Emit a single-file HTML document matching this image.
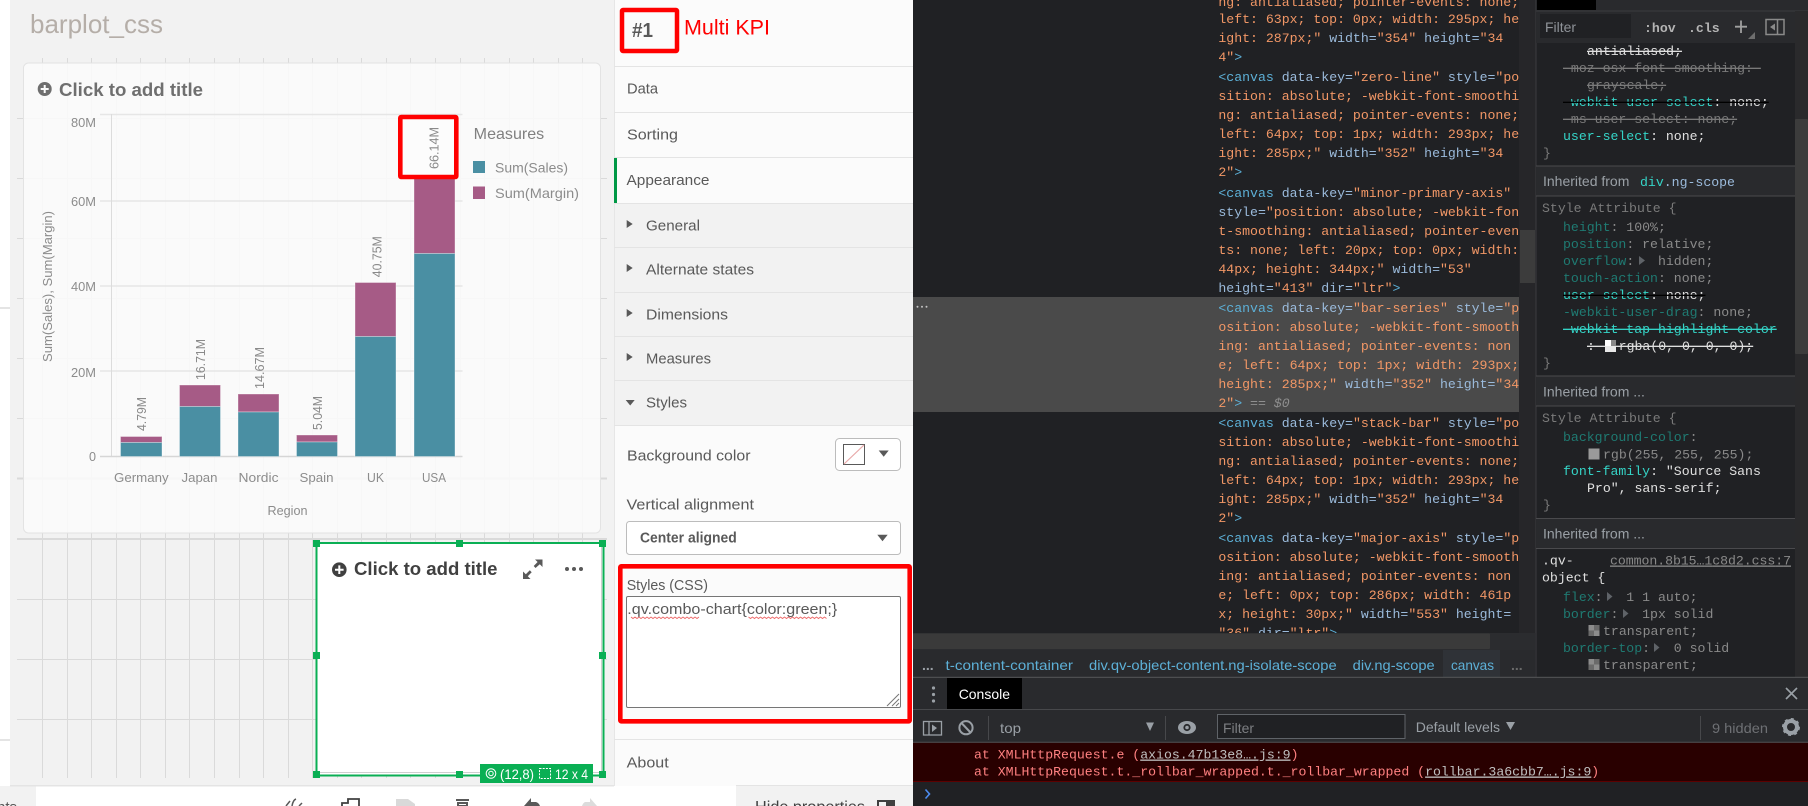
<!DOCTYPE html>
<html><head><meta charset="utf-8"><title>barplot_css</title>
<style>
html,body{margin:0;padding:0;width:1808px;height:806px;overflow:hidden;background:#202124}
svg{display:block}
text{white-space:pre;font-family:"Liberation Sans",sans-serif}
.m text,text.m{font-family:"Liberation Mono",monospace;font-size:13.2px}
.t{fill:#5db0d7}.a{fill:#9bbbdc}.v{fill:#f29766}.i{fill:#8f8f8f;font-style:italic}
.n{fill:#35d4c7}.w{fill:#e0e0e0}.dn{fill:#1f7a72}.dv{fill:#8a8a8a}.g{fill:#7a7a7a}
.p{font-size:15px;fill:#595959}
.ax{font-size:13px;fill:#8c8c8c}
.dl{font-size:12.5px;fill:#8a8a8a;text-anchor:middle}
</style></head><body>
<svg width="1808" height="806" viewBox="0 0 1808 806" xmlns="http://www.w3.org/2000/svg">
<!-- left strip + canvas -->
<rect x="0" y="0" width="10" height="786" fill="#fff"/>
<rect x="0" y="307" width="10" height="2" fill="#e4e4e4"/>
<rect x="0" y="739" width="10" height="2" fill="#e4e4e4"/>
<rect x="10" y="0" width="604" height="786" fill="#f2f2f2"/>
<g stroke="#dadada" stroke-width="1">
<path d="M42.5 58V778M67.5 58V778M91.5 58V778M116.5 58V778M140.5 58V778M165.5 58V778M189.5 58V778M214.5 58V778M239.5 58V778M263.5 58V778M288.5 58V778M312.5 58V778M337.5 58V778M361.5 58V778M386.5 58V778M410.5 58V778M435.5 58V778M460.5 58V778M484.5 58V778M509.5 58V778M533.5 58V778M558.5 58V778M582.5 58V778"/>
<path d="M17 118.5H607M17 178.5H607M17 238.5H607M17 298.5H607M17 358.5H607M17 418.5H607M17 599.5H607M17 659.5H607M17 719.5H607"/>
<path d="M17 478.5H607M17 539H607" stroke-width="2"/>
</g>
<text x="30" y="33" font-size="26" fill="#b5aea8" textLength="133" lengthAdjust="spacingAndGlyphs">barplot_css</text>
<!-- card -->
<rect x="23.5" y="63" width="577" height="470" rx="5" fill="#fcfcfc" fill-opacity=".86" stroke="#e3e3e3"/>
<circle cx="44.7" cy="89" r="7" fill="#6f6f6f"/><path d="M40.7 89H48.7M44.7 85V93" stroke="#fcfcfc" stroke-width="2"/>
<text x="59" y="96" font-size="18.5" font-weight="bold" fill="#6f6f6f" textLength="144" lengthAdjust="spacingAndGlyphs">Click to add title</text>
<!-- chart grid -->
<g stroke="#e6e6e6"><path d="M100 114.5H462.5M100 201H462.5M100 286H462.5M100 371H462.5" stroke-width="1.5"/><path d="M111.5 114V456" stroke="#dcdcdc"/><path d="M100 456.5H462.5" stroke="#d6d6d6" stroke-width="1.5"/></g>
<g class="ax"><text class="ax" x="71" y="127" textLength="25" lengthAdjust="spacingAndGlyphs">80M</text>
<text class="ax" x="71" y="206" textLength="25" lengthAdjust="spacingAndGlyphs">60M</text>
<text class="ax" x="71" y="291" textLength="25" lengthAdjust="spacingAndGlyphs">40M</text>
<text class="ax" x="71" y="377" textLength="25" lengthAdjust="spacingAndGlyphs">20M</text>
<text class="ax" x="89" y="461" textLength="7" lengthAdjust="spacingAndGlyphs">0</text></g>
<!-- bars -->
<g stroke="#ffffff" stroke-opacity=".35">
<rect x="120.5" y="436.5" width="41.5" height="6" fill="#a65b86"/><rect x="120.5" y="442.5" width="41.5" height="14" fill="#4a8fa3"/>
<rect x="179.5" y="385" width="41" height="21.5" fill="#a65b86"/><rect x="179.5" y="406.5" width="41" height="50" fill="#4a8fa3"/>
<rect x="238" y="394" width="41" height="18" fill="#a65b86"/><rect x="238" y="412" width="41" height="44.5" fill="#4a8fa3"/>
<rect x="296.5" y="435" width="41" height="7" fill="#a65b86"/><rect x="296.5" y="442" width="41" height="14.5" fill="#4a8fa3"/>
<rect x="355" y="282.5" width="41" height="54" fill="#a65b86"/><rect x="355" y="336.5" width="41" height="120" fill="#4a8fa3"/>
<rect x="414" y="174" width="41" height="79.5" fill="#a65b86"/><rect x="414" y="253.5" width="41" height="203" fill="#4a8fa3"/>
</g>
<text class="dl" transform="translate(141.6,414) rotate(-90)" y="4.5" textLength="34" lengthAdjust="spacingAndGlyphs">4.79M</text>
<text class="dl" transform="translate(200.5,359.5) rotate(-90)" y="4.5" textLength="41" lengthAdjust="spacingAndGlyphs">16.71M</text>
<text class="dl" transform="translate(259.4,368) rotate(-90)" y="4.5" textLength="42" lengthAdjust="spacingAndGlyphs">14.67M</text>
<text class="dl" transform="translate(317.5,413) rotate(-90)" y="4.5" textLength="34" lengthAdjust="spacingAndGlyphs">5.04M</text>
<text class="dl" transform="translate(377,256.7) rotate(-90)" y="4.5" textLength="41" lengthAdjust="spacingAndGlyphs">40.75M</text>
<rect x="400.5" y="117" width="56" height="60" fill="#fcfcfc"/>
<text class="dl" transform="translate(434,148) rotate(-90)" y="4.5" textLength="42" lengthAdjust="spacingAndGlyphs">66.14M</text>
<rect x="400.3" y="117" width="56" height="60" rx="1" fill="none" stroke="#ff0000" stroke-width="4.6"/>
<text class="ax" x="114" y="482" textLength="54.6" lengthAdjust="spacingAndGlyphs">Germany</text>
<text class="ax" x="181.5" y="482" textLength="36" lengthAdjust="spacingAndGlyphs">Japan</text>
<text class="ax" x="238.5" y="482" textLength="40" lengthAdjust="spacingAndGlyphs">Nordic</text>
<text class="ax" x="299.5" y="482" textLength="34" lengthAdjust="spacingAndGlyphs">Spain</text>
<text class="ax" x="367" y="482" textLength="17" lengthAdjust="spacingAndGlyphs">UK</text>
<text class="ax" x="422" y="482" textLength="24" lengthAdjust="spacingAndGlyphs">USA</text>
<text class="ax" x="267.5" y="515" textLength="40" lengthAdjust="spacingAndGlyphs">Region</text>
<text class="ax" text-anchor="middle" transform="translate(47.5,286.5) rotate(-90)" y="4.5" textLength="151" lengthAdjust="spacingAndGlyphs">Sum(Sales), Sum(Margin)</text>
<!-- legend -->
<text x="473.7" y="139" font-size="16" fill="#808080" textLength="70.5" lengthAdjust="spacingAndGlyphs">Measures</text>
<rect x="473" y="161" width="12" height="12" fill="#4a8fa3"/><rect x="473" y="186.5" width="12" height="12.5" fill="#a65b86"/>
<text x="495" y="172.5" font-size="14" fill="#8c8c8c" textLength="73" lengthAdjust="spacingAndGlyphs">Sum(Sales)</text>
<text x="495" y="198" font-size="14" fill="#8c8c8c" textLength="84" lengthAdjust="spacingAndGlyphs">Sum(Margin)</text>
<!-- selected object -->
<rect x="316.5" y="543" width="287" height="232.5" fill="#fff" stroke="#0aaf54" stroke-width="2"/>
<path d="M318 772.5H601.5V545" fill="none" stroke="#cfcfcf" stroke-width="1"/>
<circle cx="339.3" cy="569.7" r="7.3" fill="#404040"/><path d="M335 569.7H343.6M339.3 565.4V574" stroke="#fff" stroke-width="2"/>
<text x="354" y="575" font-size="18.5" font-weight="bold" fill="#404040" textLength="143.5" lengthAdjust="spacingAndGlyphs">Click to add title</text>
<path d="M535 559.5H542.5V567L539.8 564.3L535.5 568L533.7 566L537.6 562Z" fill="#595959"/>
<path d="M523 579H530.5L527.8 576.3L531.7 572.2L529.8 570.3L525.8 574.3L523 571.5Z" fill="#595959"/>
<circle cx="567" cy="569" r="2" fill="#595959"/><circle cx="574" cy="569" r="2" fill="#595959"/><circle cx="581" cy="569" r="2" fill="#595959"/>
<g fill="#0aaf54">
<rect x="313" y="540" width="7" height="7"/><rect x="456" y="540" width="7" height="7"/><rect x="599" y="540" width="7" height="7"/>
<rect x="313" y="652" width="7" height="7"/><rect x="599" y="652" width="7" height="7"/>
<rect x="313" y="771" width="7" height="7"/><rect x="456" y="771" width="7" height="7"/><rect x="599" y="771" width="7" height="7"/>
<rect x="480" y="764" width="113" height="19"/></g>
<circle cx="491" cy="773.5" r="4.8" fill="none" stroke="#fff"/><circle cx="491" cy="773.5" r="2.2" fill="none" stroke="#fff"/>
<text x="500" y="779" font-size="14" fill="#fff" textLength="34" lengthAdjust="spacingAndGlyphs">(12,8)</text>
<rect x="539.5" y="768.5" width="11" height="10" fill="none" stroke="#fff" stroke-dasharray="2 1.2"/>
<text x="555" y="779" font-size="14" fill="#fff" textLength="33" lengthAdjust="spacingAndGlyphs">12 x 4</text>
<!-- bottom toolbar -->
<rect x="0" y="786" width="36" height="20" fill="#f2f2f2"/>
<rect x="36" y="786" width="700" height="20" fill="#fff"/>
<rect x="10" y="785" width="604" height="1.5" fill="#e4e4e4"/>
<text x="-3" y="812" font-size="15" fill="#595959">nts</text>
<path d="M286 806L290 801M292 806Q293 800 296 799M299 806L302 803" stroke="#595959" stroke-width="1.5" fill="none"/>
<path d="M342 806V803H348V799H359V806" fill="none" stroke="#404040" stroke-width="1.8"/>
<path d="M396 806V799H408L415 804V806Z" fill="#d9d9d9"/>
<path d="M456 800H469M458 803H467V806H458Z" stroke="#595959" stroke-width="2" fill="none"/>
<path d="M524 806L531 798V802H536Q539 803 540 806Z" fill="#595959"/>
<path d="M597 806L590 798V802H585Q583 803 582 806Z" fill="#dcdcdc"/>
<!-- properties panel -->
<rect x="614" y="0" width="299" height="786" fill="#fbfbfb"/>
<rect x="614" y="203" width="299" height="222" fill="#f2f2f2"/>
<rect x="736" y="786" width="177" height="20" fill="#f2f2f2"/>
<rect x="614" y="0" width="1" height="786" fill="#e6e6e6"/>
<g fill="#e4e4e4"><rect x="614" y="66" width="299" height="1"/><rect x="614" y="112" width="299" height="1"/><rect x="614" y="157" width="299" height="1"/><rect x="614" y="203" width="299" height="1"/><rect x="614" y="247" width="299" height="1"/><rect x="614" y="292" width="299" height="1"/><rect x="614" y="336" width="299" height="1"/><rect x="614" y="380" width="299" height="1"/><rect x="614" y="425" width="299" height="1"/><rect x="614" y="739" width="299" height="1"/><rect x="736" y="785" width="177" height="1"/></g>
<rect x="614" y="158" width="3" height="45" fill="#009845"/>
<rect x="622" y="10" width="55" height="41" rx="1" fill="none" stroke="#ff0000" stroke-width="4.5"/>
<text x="632" y="37" font-size="20" font-weight="bold" fill="#595959" textLength="21" lengthAdjust="spacingAndGlyphs">#1</text>
<text x="684" y="34.5" font-size="21" fill="#ff0000" textLength="86" lengthAdjust="spacingAndGlyphs">Multi KPI</text>
<text class="p" x="627" y="93.5" textLength="31" lengthAdjust="spacingAndGlyphs">Data</text>
<text class="p" x="627" y="139.5" textLength="51" lengthAdjust="spacingAndGlyphs">Sorting</text>
<text class="p" x="626.5" y="185" textLength="83" lengthAdjust="spacingAndGlyphs">Appearance</text>
<text class="p" x="646" y="230.5" textLength="54" lengthAdjust="spacingAndGlyphs">General</text>
<text class="p" x="646" y="274.5" textLength="108" lengthAdjust="spacingAndGlyphs">Alternate states</text>
<text class="p" x="646" y="319.5" textLength="82" lengthAdjust="spacingAndGlyphs">Dimensions</text>
<text class="p" x="646" y="363.5" textLength="65" lengthAdjust="spacingAndGlyphs">Measures</text>
<text class="p" x="646" y="407.5" textLength="41" lengthAdjust="spacingAndGlyphs">Styles</text>
<g fill="#595959"><path d="M626.7 220V228L632.7 224Z"/><path d="M626.7 264V272L632.7 268Z"/><path d="M626.7 309V317L632.7 313Z"/><path d="M626.7 353V361L632.7 357Z"/><path d="M625.7 400H634.7L630.2 405.5Z"/></g>
<text class="p" x="627" y="460.5" textLength="123.5" lengthAdjust="spacingAndGlyphs">Background color</text>
<rect x="835.5" y="438.5" width="65" height="32" rx="4" fill="#fff" stroke="#bcbcbc"/>
<rect x="843.5" y="444.5" width="21" height="20" fill="#fff" stroke="#595959"/><path d="M844 464L864 445" stroke="#e8a8a8" stroke-width="1.2"/>
<path d="M878.7 450.5H888.7L883.7 456.7Z" fill="#595959"/>
<text class="p" x="626.5" y="509.5" textLength="127.5" lengthAdjust="spacingAndGlyphs">Vertical alignment</text>
<rect x="626.5" y="521.5" width="274" height="33" rx="3" fill="#fff" stroke="#bcbcbc"/>
<text x="640" y="542.5" font-size="14.5" font-weight="bold" fill="#595959" textLength="96.7" lengthAdjust="spacingAndGlyphs">Center aligned</text>
<path d="M877.3 534.7H887.7L882.5 541.3Z" fill="#595959"/>
<rect x="620.3" y="566.3" width="289.4" height="155" rx="1" fill="none" stroke="#ff0000" stroke-width="4.6"/>
<text class="p" x="626.7" y="590" textLength="81.3" lengthAdjust="spacingAndGlyphs">Styles (CSS)</text>
<rect x="626.5" y="596.5" width="274" height="111" rx="1.5" fill="#fff" stroke="#767676"/>
<text class="p" x="627.3" y="614" textLength="210" lengthAdjust="spacingAndGlyphs">.qv.combo-chart{color:green;}</text>
<path d="M631 617l2 1.5 2-1.5 2 1.5 2-1.5 2 1.5 2-1.5 2 1.5 2-1.5 2 1.5 2-1.5 2 1.5 2-1.5 2 1.5 2-1.5 2 1.5 2-1.5 2 1.5 2-1.5 2 1.5 2-1.5 2 1.5 2-1.5 2 1.5 2-1.5 2 1.5 2-1.5 2 1.5 2-1.5 2 1.5 2-1.5 2 1.5 2-1.5 2 1.5 2-1.5" fill="none" stroke="#e66" stroke-width=".9"/>
<path d="M748.5 617l2 1.5 2-1.5 2 1.5 2-1.5 2 1.5 2-1.5 2 1.5 2-1.5 2 1.5 2-1.5 2 1.5 2-1.5 2 1.5 2-1.5 2 1.5 2-1.5 2 1.5 2-1.5 2 1.5 2-1.5 2 1.5 2-1.5 2 1.5 2-1.5 2 1.5 2-1.5 2 1.5 2-1.5 2 1.5 2-1.5 2 1.5 2-1.5 2 1.5 2-1.5 2 1.5 2-1.5 2 1.5 2-1.5 2 1.5" fill="none" stroke="#e66" stroke-width=".9"/>
<path d="M887 706L899 694M892 706L899 699M896 706L899 703" stroke="#777" stroke-width="1" fill="none"/>
<text class="p" x="626.7" y="767.5" textLength="42" lengthAdjust="spacingAndGlyphs">About</text>
<text x="755" y="812" font-size="16" fill="#404040" textLength="110" lengthAdjust="spacingAndGlyphs">Hide properties</text>
<rect x="878" y="801" width="16" height="12" fill="none" stroke="#404040" stroke-width="2"/><rect x="886" y="801" width="8" height="8" fill="#404040"/>
<!-- devtools -->
<rect x="913" y="0" width="895" height="806" fill="#202124"/>
<rect x="913" y="297" width="606" height="115" fill="#4a4a4a"/>
<g fill="#c4c4c4"><circle cx="917.5" cy="306.7" r="1"/><circle cx="922" cy="306.7" r="1"/><circle cx="926.5" cy="306.7" r="1"/></g>
<rect x="1519" y="0" width="16.5" height="633" fill="#262629"/>
<rect x="1520" y="230" width="15" height="53" fill="#3c3c3c"/>
<g class="m">
<text x="1218.4" y="6"><tspan class="v">ng: antialiased; pointer-events: none;</tspan></text>
<text x="1218.4" y="23"><tspan class="v">left: 63px; top: 0px; width: 295px; he</tspan></text>
<text x="1218.4" y="42"><tspan class="v">ight: 287px;"</tspan><tspan class="a"> width=</tspan><tspan class="v">"354"</tspan><tspan class="a"> height=</tspan><tspan class="v">"34</tspan></text>
<text x="1218.4" y="61"><tspan class="v">4"</tspan><tspan class="t">&gt;</tspan></text>
<text x="1218.4" y="81"><tspan class="t">&lt;canvas</tspan><tspan class="a"> data-key=</tspan><tspan class="v">"zero-line"</tspan><tspan class="a"> style=</tspan><tspan class="v">"po</tspan></text>
<text x="1218.4" y="100"><tspan class="v">sition: absolute; -webkit-font-smoothi</tspan></text>
<text x="1218.4" y="119"><tspan class="v">ng: antialiased; pointer-events: none;</tspan></text>
<text x="1218.4" y="138"><tspan class="v">left: 64px; top: 1px; width: 293px; he</tspan></text>
<text x="1218.4" y="157"><tspan class="v">ight: 285px;"</tspan><tspan class="a"> width=</tspan><tspan class="v">"352"</tspan><tspan class="a"> height=</tspan><tspan class="v">"34</tspan></text>
<text x="1218.4" y="176"><tspan class="v">2"</tspan><tspan class="t">&gt;</tspan></text>
<text x="1218.4" y="197"><tspan class="t">&lt;canvas</tspan><tspan class="a"> data-key=</tspan><tspan class="v">"minor-primary-axis"</tspan></text>
<text x="1218.4" y="216"><tspan class="a">style=</tspan><tspan class="v">"position: absolute; -webkit-fon</tspan></text>
<text x="1218.4" y="235"><tspan class="v">t-smoothing: antialiased; pointer-even</tspan></text>
<text x="1218.4" y="254"><tspan class="v">ts: none; left: 20px; top: 0px; width:</tspan></text>
<text x="1218.4" y="273"><tspan class="v">44px; height: 344px;"</tspan><tspan class="a"> width=</tspan><tspan class="v">"53"</tspan></text>
<text x="1218.4" y="292"><tspan class="a">height=</tspan><tspan class="v">"413"</tspan><tspan class="a"> dir=</tspan><tspan class="v">"ltr"</tspan><tspan class="t">&gt;</tspan></text>
<text x="1218.4" y="312"><tspan class="t">&lt;canvas</tspan><tspan class="a"> data-key=</tspan><tspan class="v">"bar-series"</tspan><tspan class="a"> style=</tspan><tspan class="v">"p</tspan></text>
<text x="1218.4" y="331"><tspan class="v">osition: absolute; -webkit-font-smooth</tspan></text>
<text x="1218.4" y="350"><tspan class="v">ing: antialiased; pointer-events: non</tspan></text>
<text x="1218.4" y="369"><tspan class="v">e; left: 64px; top: 1px; width: 293px;</tspan></text>
<text x="1218.4" y="388"><tspan class="v">height: 285px;"</tspan><tspan class="a"> width=</tspan><tspan class="v">"352"</tspan><tspan class="a"> height=</tspan><tspan class="v">"34</tspan></text>
<text x="1218.4" y="407"><tspan class="v">2"</tspan><tspan class="t">&gt;</tspan><tspan class="i"> == $0</tspan></text>
<text x="1218.4" y="427"><tspan class="t">&lt;canvas</tspan><tspan class="a"> data-key=</tspan><tspan class="v">"stack-bar"</tspan><tspan class="a"> style=</tspan><tspan class="v">"po</tspan></text>
<text x="1218.4" y="446"><tspan class="v">sition: absolute; -webkit-font-smoothi</tspan></text>
<text x="1218.4" y="465"><tspan class="v">ng: antialiased; pointer-events: none;</tspan></text>
<text x="1218.4" y="484"><tspan class="v">left: 64px; top: 1px; width: 293px; he</tspan></text>
<text x="1218.4" y="503"><tspan class="v">ight: 285px;"</tspan><tspan class="a"> width=</tspan><tspan class="v">"352"</tspan><tspan class="a"> height=</tspan><tspan class="v">"34</tspan></text>
<text x="1218.4" y="522"><tspan class="v">2"</tspan><tspan class="t">&gt;</tspan></text>
<text x="1218.4" y="542"><tspan class="t">&lt;canvas</tspan><tspan class="a"> data-key=</tspan><tspan class="v">"major-axis"</tspan><tspan class="a"> style=</tspan><tspan class="v">"p</tspan></text>
<text x="1218.4" y="561"><tspan class="v">osition: absolute; -webkit-font-smooth</tspan></text>
<text x="1218.4" y="580"><tspan class="v">ing: antialiased; pointer-events: non</tspan></text>
<text x="1218.4" y="599"><tspan class="v">e; left: 0px; top: 286px; width: 461p</tspan></text>
<text x="1218.4" y="618"><tspan class="v">x; height: 30px;"</tspan><tspan class="a"> width=</tspan><tspan class="v">"553"</tspan><tspan class="a"> height=</tspan></text>
<text x="1218.4" y="637"><tspan class="v">"36"</tspan><tspan class="a"> dir=</tspan><tspan class="v">"ltr"</tspan><tspan class="t">&gt;</tspan></text>
</g>
<!-- horizontal scrollbar + breadcrumbs -->
<rect x="913" y="633" width="622" height="17" fill="#2b2c2f"/>
<rect x="913" y="633.5" width="577" height="15.5" rx="1" fill="#3a3a3a"/>
<rect x="913" y="650" width="622" height="27" fill="#292a2d"/>
<rect x="1443" y="650" width="57" height="27" fill="#2f3237"/>
<g font-size="14" fill="#5db0d7">
<text x="922" y="670" fill="#9aa0a6" font-weight="bold">...</text>
<text x="945.5" y="670" textLength="127.5" lengthAdjust="spacingAndGlyphs">t-content-container</text>
<text x="1089" y="670" textLength="247.7" lengthAdjust="spacingAndGlyphs">div.qv-object-content.ng-isolate-scope</text>
<text x="1352.7" y="670" textLength="82" lengthAdjust="spacingAndGlyphs">div.ng-scope</text>
<text x="1451" y="670" textLength="43" lengthAdjust="spacingAndGlyphs">canvas</text>
<text x="1511" y="670" fill="#6a6a6a" font-weight="bold">...</text></g>
<!-- styles pane -->
<rect x="1535.5" y="0" width="1" height="677" fill="#3c3c3f"/>
<rect x="1536" y="0" width="272" height="11" fill="#292a2d"/>
<rect x="1537" y="0" width="59" height="10" fill="#000"/>
<rect x="1536" y="11" width="259" height="32" fill="#292a2d"/>
<rect x="1536" y="10.5" width="272" height="1" fill="#3c3c3f"/>
<rect x="1540" y="14" width="91" height="24" fill="#202124"/>
<text x="1545" y="32" font-size="14" fill="#8f9399" textLength="31" lengthAdjust="spacingAndGlyphs">Filter</text>
<g class="m"><text x="1644" y="32" fill="#b4b4b4" font-weight="bold">:hov</text><text x="1688" y="32" fill="#b4b4b4" font-weight="bold">.cls</text></g>
<path d="M1735 26.7H1747M1741 20.5V33" stroke="#a0a0a0" stroke-width="1.8"/><path d="M1755 32V39H1748Z" fill="#6e6e6e"/>
<rect x="1766" y="19.5" width="18" height="15" fill="none" stroke="#8a8a8a" stroke-width="1.5"/><path d="M1777.5 19.5V34.5" stroke="#8a8a8a" stroke-width="1.5"/><path d="M1775 23.5V30.5L1770 27Z" fill="#8a8a8a"/>
<rect x="1795" y="11" width="13" height="666" fill="#2a2a2c"/>
<rect x="1795" y="119" width="13" height="235" rx="1" fill="#3c3c3c"/>
<g class="m">
<text x="1587" y="55" class="w" text-decoration="line-through">antialiased;</text>
<text x="1563" y="72" class="g" text-decoration="line-through">-moz-osx-font-smoothing: </text>
<text x="1587" y="89" class="g" text-decoration="line-through">grayscale;</text>
<text x="1563" y="106" text-decoration="line-through"><tspan class="n">-webkit-user-select</tspan><tspan class="w">: none;</tspan></text>
<text x="1563" y="123" class="g" text-decoration="line-through">-ms-user-select: none;</text>
<text x="1563" y="140"><tspan class="n">user-select</tspan><tspan class="w">: none;</tspan></text>
<text x="1543" y="157" class="g">}</text>
</g>
<rect x="1536" y="166" width="259" height="30" fill="#292a2d"/>
<rect x="1536" y="165.5" width="259" height="1" fill="#4a4a4d"/><rect x="1536" y="195.5" width="259" height="1" fill="#4a4a4d"/>
<g class="m">
<text x="1543" y="186"><tspan fill="#9aa0a6" style="font-family:'Liberation Sans',sans-serif;font-size:14px">Inherited from </tspan></text>
<text x="1640" y="186"><tspan class="n">div</tspan><tspan class="a">.ng-scope</tspan></text>
<text x="1542" y="212" class="g">Style Attribute {</text>
<text x="1563" y="231"><tspan class="dn">height</tspan><tspan class="dv">: 100%;</tspan></text>
<text x="1563" y="248"><tspan class="dn">position</tspan><tspan class="dv">: relative;</tspan></text>
<text x="1563" y="265"><tspan class="dn">overflow</tspan><tspan class="dv">:   hidden;</tspan></text>
<text x="1563" y="282"><tspan class="dn">touch-action</tspan><tspan class="dv">: none;</tspan></text>
<text x="1563" y="299" text-decoration="line-through"><tspan class="n">user-select</tspan><tspan class="w">: none;</tspan></text>
<text x="1563" y="316"><tspan class="dn">-webkit-user-drag</tspan><tspan class="dv">: none;</tspan></text>
<text x="1563" y="333" class="n" text-decoration="line-through">-webkit-tap-highlight-color</text>
<text x="1587" y="350" class="w" text-decoration="line-through">:   rgba(0, 0, 0, 0);</text>
</g>
<path d="M1639 256V265L1645 260.5Z" fill="#5f6368"/>
<rect x="1605" y="340" width="11" height="12" fill="#e8e8e8"/><rect x="1605" y="340" width="6" height="6" fill="#fff"/><rect x="1611" y="340" width="5" height="6" fill="#888"/>
<g class="m"><text x="1543" y="367" class="g">}</text></g>
<rect x="1536" y="376" width="259" height="30" fill="#292a2d"/>
<rect x="1536" y="375.5" width="259" height="1" fill="#4a4a4d"/><rect x="1536" y="405.5" width="259" height="1" fill="#4a4a4d"/>
<text x="1543" y="396.5" font-size="14" fill="#9aa0a6">Inherited from ...</text>
<g class="m">
<text x="1542" y="422" class="g">Style Attribute {</text>
<text x="1563" y="441" class="dn">background-color<tspan class="dv">:</tspan></text>
<text x="1603" y="458.5" class="dv">rgb(255, 255, 255);</text>
<text x="1563" y="475"><tspan class="n">font-family</tspan><tspan class="w">: "Source Sans</tspan></text>
<text x="1587" y="492" class="w">Pro", sans-serif;</text>
<text x="1543" y="509" class="g">}</text>
</g>
<rect x="1588.5" y="448.5" width="11" height="11" fill="#9a9a9a"/>
<rect x="1536" y="518" width="259" height="30.5" fill="#292a2d"/>
<rect x="1536" y="518" width="259" height="1" fill="#4a4a4d"/><rect x="1536" y="548" width="259" height="1" fill="#4a4a4d"/>
<text x="1543" y="538.5" font-size="14" fill="#9aa0a6">Inherited from ...</text>
<g class="m">
<text x="1542" y="564.5" class="w">.qv-</text>
<text x="1610" y="564.5" fill="#8a8a8a" text-decoration="underline" textLength="181">common.8b15…1c8d2.css:7</text>
<text x="1542" y="581.5" class="w">object {</text>
<text x="1563" y="601"><tspan class="dn">flex</tspan><tspan class="dv">:   1 1 auto;</tspan></text>
<text x="1563" y="618"><tspan class="dn">border</tspan><tspan class="dv">:   1px solid</tspan></text>
<text x="1603" y="635" class="dv">transparent;</text>
<text x="1563" y="652"><tspan class="dn">border-top</tspan><tspan class="dv">:   0 solid</tspan></text>
<text x="1603" y="669" class="dv">transparent;</text>
</g>
<path d="M1607 592V601L1612.5 596.5ZM1623 609V618L1628.5 613.5ZM1654 643V652L1659.5 647.5Z" fill="#5f6368"/>
<g fill="#8c8c8c"><rect x="1588.5" y="625" width="11" height="11"/><rect x="1588.5" y="659" width="11" height="11"/></g>
<g fill="#6a6a6a"><rect x="1594" y="625" width="5.5" height="5.5"/><rect x="1588.5" y="630.5" width="5.5" height="5.5"/><rect x="1594" y="659" width="5.5" height="5.5"/><rect x="1588.5" y="664.5" width="5.5" height="5.5"/></g>
<!-- console drawer -->
<rect x="913" y="677" width="895" height="65" fill="#292a2d"/>
<rect x="913" y="676.8" width="895" height="1" fill="#56575a"/>
<rect x="913" y="709" width="895" height="1" fill="#47484b"/>
<rect x="913" y="741.8" width="895" height="1" fill="#56575a"/>
<g fill="#9aa0a6"><circle cx="933.5" cy="688" r="1.6"/><circle cx="933.5" cy="694.5" r="1.6"/><circle cx="933.5" cy="701" r="1.6"/></g>
<rect x="947" y="678" width="75" height="31" fill="#000"/>
<text x="958.7" y="699" font-size="14" fill="#fff" textLength="51.3" lengthAdjust="spacingAndGlyphs">Console</text>
<path d="M1786 688L1797 699M1797 688L1786 699" stroke="#9aa0a6" stroke-width="1.6"/>
<rect x="923.5" y="721.5" width="18" height="13.5" fill="none" stroke="#9aa0a6" stroke-width="1.3"/><path d="M929 721.5V735" stroke="#9aa0a6" stroke-width="1.3"/><path d="M932 724.5V732L937 728Z" fill="#9aa0a6"/>
<circle cx="966" cy="727.7" r="6.6" fill="none" stroke="#9aa0a6" stroke-width="2"/><path d="M961.5 723L970.5 732.5" stroke="#9aa0a6" stroke-width="2"/>
<rect x="988" y="716" width="1" height="24" fill="#47484b"/>
<text x="1000" y="733" font-size="14" fill="#9aa0a6" textLength="21" lengthAdjust="spacingAndGlyphs">top</text>
<path d="M1146 722.5H1154L1150 731Z" fill="#9aa0a6"/>
<rect x="1165" y="716" width="1" height="24" fill="#47484b"/>
<ellipse cx="1187" cy="727.5" rx="9" ry="6.5" fill="#9aa0a6"/><circle cx="1187" cy="727.5" r="3.6" fill="#292a2d"/><circle cx="1187" cy="727.5" r="1.8" fill="#9aa0a6"/>
<rect x="1217.5" y="714.5" width="187.5" height="24" fill="#202124" stroke="#5f6368"/>
<text x="1223" y="733" font-size="14" fill="#7d7f83" textLength="31" lengthAdjust="spacingAndGlyphs">Filter</text>
<text x="1415.7" y="732" font-size="14" fill="#9aa0a6" textLength="84.3" lengthAdjust="spacingAndGlyphs">Default levels</text>
<path d="M1506 722H1515L1510.5 730Z" fill="#9aa0a6"/>
<rect x="1700" y="716" width="1" height="24" fill="#47484b"/>
<text x="1712" y="733" font-size="14" fill="#6e7074" textLength="56" lengthAdjust="spacingAndGlyphs">9 hidden</text>
<circle cx="1791" cy="727" r="6" fill="none" stroke="#9aa0a6" stroke-width="4"/><circle cx="1791" cy="727" r="8" fill="none" stroke="#9aa0a6" stroke-width="2" stroke-dasharray="3 3.2"/>
<rect x="913" y="742.8" width="895" height="38.5" fill="#290000"/>
<rect x="913" y="781" width="895" height="1" fill="#5c0000"/>
<g class="m" style="fill:#ff8080">
<text x="974" y="758.5" fill="#ff8080">at XMLHttpRequest.e (<tspan fill="#c0c0c0" text-decoration="underline">axios.47b13e8….js:9</tspan>)</text>
<text x="974" y="775.5" fill="#ff8080">at XMLHttpRequest.t._rollbar_wrapped.t._rollbar_wrapped (<tspan fill="#c0c0c0" text-decoration="underline">rollbar.3a6cbb7….js:9</tspan>)</text>
</g>
<path d="M925.5 789.5L929.5 794L925.5 798.5" fill="none" stroke="#4d8cf0" stroke-width="1.6"/>
</svg>
</body></html>
